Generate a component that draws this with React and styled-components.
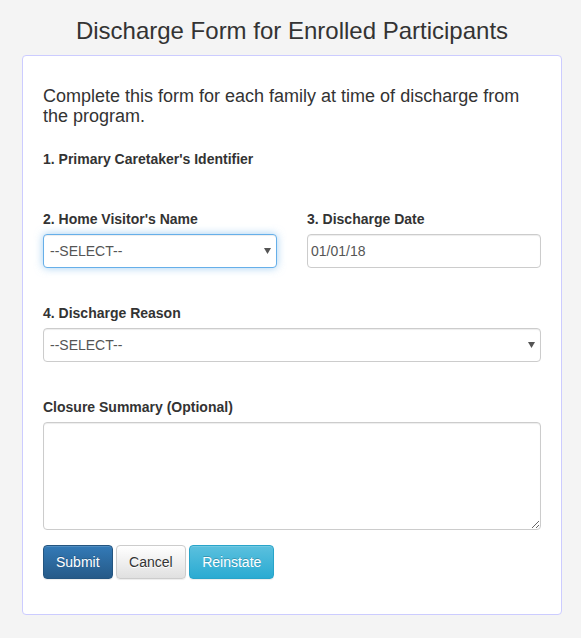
import React from "react";
import styled, { createGlobalStyle } from "styled-components";

const Global = createGlobalStyle`
  html, body { margin: 0; padding: 0; background: #f4f4f4; }
  body {
    font-family: "Liberation Sans", Arial, sans-serif;
    font-size: 14px;
    line-height: 1.42857;
    color: #333;
  }
  * { box-sizing: border-box; }
`;

const Page = styled.div`
  width: 581px;
  min-height: 638px;
  padding: 0 19px 0 22px;
  display: flex;
  flex-direction: column;
`;

const Title = styled.h2`
  margin: 17px 0 11px;
  font-size: 24px;
  font-weight: 400;
  line-height: 27px;
  text-align: center;
  color: #333;
`;

const Card = styled.div`
  background: #fff;
  border: 1px solid #ccccff;
  border-radius: 4px;
  padding: 20px 20px 35px;
`;

const Intro = styled.h4`
  margin: 10px 0 23px;
  font-size: 18px;
  font-weight: 400;
  line-height: 20px;
  color: #333;
`;

const Group = styled.div`
  margin-bottom: ${(p) => p.$mb || 0}px;
`;

const Row = styled.div`
  display: grid;
  grid-template-columns: 1fr 1fr;
  column-gap: 30px;
  margin-bottom: 35px;
`;

const Label = styled.label`
  display: block;
  font-weight: 700;
  font-size: 14px;
  line-height: 20px;
  margin-bottom: 5px;
  color: #333;
`;

const fieldBase = `
  display: block;
  width: 100%;
  height: 34px;
  padding: 6px 6px;
  font-family: "Liberation Sans", Arial, sans-serif;
  font-size: 14px;
  line-height: 20px;
  color: #555;
  background: #fff;
  border: 1px solid #ccc;
  border-radius: 4px;
  box-shadow: inset 0 1px 1px rgba(0,0,0,0.075);
  outline: none;
`;

const SelectWrap = styled.div`
  position: relative;
`;

const Select = styled.select`
  ${fieldBase}
  appearance: none;
  -webkit-appearance: none;
  padding-right: 24px;
  ${(p) =>
    p.$focus &&
    `border-color: #66afe9;
     box-shadow: inset 0 1px 1px rgba(0,0,0,.075), 0 0 8px rgba(102,175,233,.6);`}
`;

const Arrow = styled.svg`
  position: absolute;
  right: 6px;
  top: 14px;
  width: 7px;
  height: 6px;
  pointer-events: none;
`;

const Input = styled.input`
  ${fieldBase}
  padding: 6px 3px;
`;

const TextArea = styled.textarea`
  ${fieldBase}
  height: 108px;
  resize: vertical;
`;

const Buttons = styled.div`
  display: flex;
  gap: 3.5px;
  margin-top: 15px;
`;

const variants = {
  primary: {
    bg: "linear-gradient(to bottom, #337ab7 0%, #265a88 100%)",
    border: "#245580",
    color: "#fff",
    shadow: "0 -1px 0 rgba(0,0,0,.2)",
  },
  default: {
    bg: "linear-gradient(to bottom, #fff 0%, #e0e0e0 100%)",
    border: "#ccc",
    color: "#333",
    shadow: "0 1px 0 #fff",
  },
  info: {
    bg: "linear-gradient(to bottom, #5bc0de 0%, #2aabd2 100%)",
    border: "#28a4c9",
    color: "#fff",
    shadow: "0 -1px 0 rgba(0,0,0,.2)",
  },
};

const Button = styled.button`
  height: 34px;
  padding: 6px 12px;
  font-family: "Liberation Sans", Arial, sans-serif;
  font-size: 14px;
  line-height: 20px;
  border-radius: 4px;
  border: 1px solid ${(p) => variants[p.$v].border};
  background: ${(p) => variants[p.$v].bg};
  color: ${(p) => variants[p.$v].color};
  text-shadow: ${(p) => variants[p.$v].shadow};
  box-shadow: inset 0 1px 0 rgba(255,255,255,.15), 0 1px 1px rgba(0,0,0,.075);
  cursor: pointer;
`;

const Caret = () => (
  <Arrow viewBox="0 0 7 6">
    <path d="M0 0 H7 L3.5 6 Z" fill="#555" />
  </Arrow>
);

export default function App() {
  return (
    <>
      <Global />
      <Page>
        <Title>Discharge Form for Enrolled Participants</Title>
        <Card>
          <Intro>Complete this form for each family at time of discharge from the program.</Intro>
          <Group $mb={40}>
            <Label>1. Primary Caretaker's Identifier</Label>
          </Group>
          <Row>
            <div>
              <Label>2. Home Visitor's Name</Label>
              <SelectWrap>
                <Select $focus defaultValue="">
                  <option value="">--SELECT--</option>
                </Select>
                <Caret />
              </SelectWrap>
            </div>
            <div>
              <Label>3. Discharge Date</Label>
              <Input type="text" defaultValue="01/01/18" />
            </div>
          </Row>
          <Group $mb={35}>
            <Label>4. Discharge Reason</Label>
            <SelectWrap>
              <Select defaultValue="">
                <option value="">--SELECT--</option>
              </Select>
              <Caret />
            </SelectWrap>
          </Group>
          <Group>
            <Label>Closure Summary (Optional)</Label>
            <TextArea />
          </Group>
          <Buttons>
            <Button $v="primary">Submit</Button>
            <Button $v="default">Cancel</Button>
            <Button $v="info">Reinstate</Button>
          </Buttons>
        </Card>
      </Page>
    </>
  );
}
